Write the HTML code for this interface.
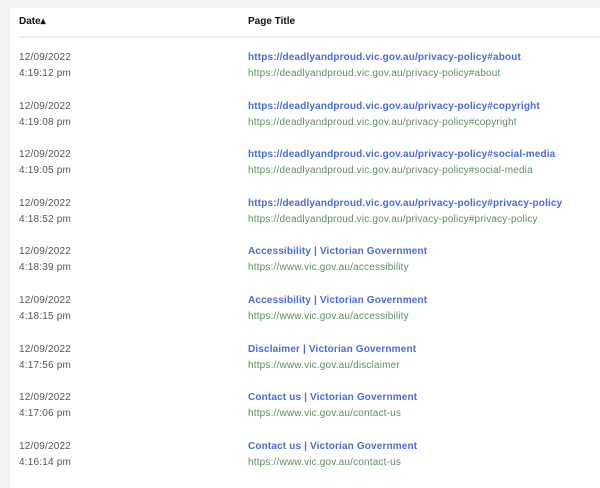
<!DOCTYPE html>
<html><head><style>
body{margin:0;width:600px;height:480px;background:#f3f3f3;overflow:hidden;font-family:"Liberation Sans",sans-serif;}
.p{position:absolute;left:10px;top:8px;width:600px;height:480px;background:#fff;}
.h{position:absolute;top:16px;font-size:10px;font-weight:bold;color:#111;}
.line{position:absolute;left:19px;top:36px;width:600px;height:2px;background:#eee;}
.r{position:absolute;left:0;width:600px;height:48px;}
.d{position:absolute;left:19px;top:0;font-size:10px;color:#555;line-height:16px;letter-spacing:0.2px}
.t{position:absolute;left:248px;top:0;line-height:16px;font-size:10px;white-space:nowrap}
.t b{color:#4a6be0;display:block;letter-spacing:0.15px}
.t span{color:#5b8f5e;display:block;letter-spacing:0.18px}
</style></head><body>
<div class="p"></div>
<div class="h" style="left:19px">Date▴</div>
<div class="h" style="left:248px">Page Title</div>
<div class="line"></div>
<div class="r" style="top:50px"><div class="d">12/09/2022<br>4:19:12 pm</div><div class="t"><b>https://deadlyandproud.vic.gov.au/privacy-policy#about</b><span>https://deadlyandproud.vic.gov.au/privacy-policy#about</span></div></div>
<div class="r" style="top:98.6px"><div class="d">12/09/2022<br>4:19:08 pm</div><div class="t"><b>https://deadlyandproud.vic.gov.au/privacy-policy#copyright</b><span>https://deadlyandproud.vic.gov.au/privacy-policy#copyright</span></div></div>
<div class="r" style="top:147.2px"><div class="d">12/09/2022<br>4:19:05 pm</div><div class="t"><b>https://deadlyandproud.vic.gov.au/privacy-policy#social-media</b><span>https://deadlyandproud.vic.gov.au/privacy-policy#social-media</span></div></div>
<div class="r" style="top:195.8px"><div class="d">12/09/2022<br>4:18:52 pm</div><div class="t"><b>https://deadlyandproud.vic.gov.au/privacy-policy#privacy-policy</b><span>https://deadlyandproud.vic.gov.au/privacy-policy#privacy-policy</span></div></div>
<div class="r" style="top:244.4px"><div class="d">12/09/2022<br>4:18:39 pm</div><div class="t"><b>Accessibility | Victorian Government</b><span>https://www.vic.gov.au/accessibility</span></div></div>
<div class="r" style="top:293px"><div class="d">12/09/2022<br>4:18:15 pm</div><div class="t"><b>Accessibility | Victorian Government</b><span>https://www.vic.gov.au/accessibility</span></div></div>
<div class="r" style="top:341.6px"><div class="d">12/09/2022<br>4:17:56 pm</div><div class="t"><b>Disclaimer | Victorian Government</b><span>https://www.vic.gov.au/disclaimer</span></div></div>
<div class="r" style="top:390.2px"><div class="d">12/09/2022<br>4:17:06 pm</div><div class="t"><b>Contact us | Victorian Government</b><span>https://www.vic.gov.au/contact-us</span></div></div>
<div class="r" style="top:438.8px"><div class="d">12/09/2022<br>4:16:14 pm</div><div class="t"><b>Contact us | Victorian Government</b><span>https://www.vic.gov.au/contact-us</span></div></div>
</body></html>
